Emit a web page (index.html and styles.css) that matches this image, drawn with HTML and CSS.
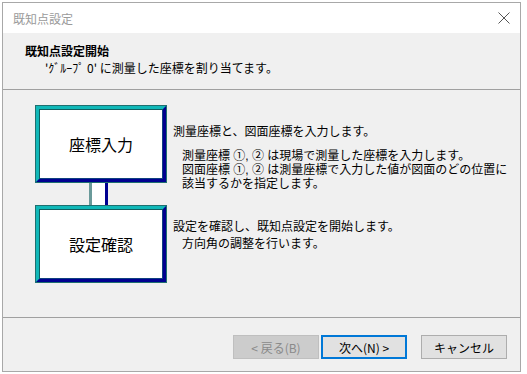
FILE: index.html
```html
<!DOCTYPE html>
<html>
<head>
<meta charset="utf-8">
<title>既知点設定</title>
<link rel="stylesheet" href="styles.css">
</head>
<body>
<div class="dialog">
  <div class="titlebar">
    <span class="title">既知点設定</span>
    <svg class="close" width="12" height="12" viewBox="0 0 12 12"><path d="M0.5 0.5L11.5 11.5M11.5 0.5L0.5 11.5" stroke="#555" stroke-width="1" fill="none"/></svg>
  </div>
  <div class="header">
    <div class="head-title">既知点設定開始</div>
    <div class="head-sub">'ｸﾞﾙｰﾌﾟ 0' に測量した座標を割り当てます。</div>
  </div>
  <div class="content">
    <div class="step">
      <div class="box">座標入力</div>
      <div class="desc">
        <p class="lead">測量座標と、図面座標を入力します。</p>
        <p class="note">測量座標 ①, ② は現場で測量した座標を入力します。<br>図面座標 ①, ② は測量座標で入力した値が図面のどの位置に<br>該当するかを指定します。</p>
      </div>
    </div>
    <div class="link"></div>
    <div class="step">
      <div class="box">設定確認</div>
      <div class="desc">
        <p class="lead second">設定を確認し、既知点設定を開始します。</p>
        <p class="note second">方向角の調整を行います。</p>
      </div>
    </div>
  </div>
  <div class="footer">
    <button class="btn disabled">&lt; 戻る(B)</button>
    <button class="btn default">次へ(N) &gt;</button>
    <button class="btn cancel">キャンセル</button>
  </div>
</div>
</body>
</html>
```

FILE: styles.css
```css
body {
    margin: 0;
    background-color: #ffffff;
    font-family: "Noto Sans CJK JP", "DejaVu Sans", sans-serif;
    font-size: 12px;
    color: #000;
}

.dialog {
    margin: 2px 0 0 2px;
    width: 517px;
    height: 368px;
    border: 1px solid #a8a8a8;
    background-color: #f0f0f0;
    display: flex;
    flex-direction: column;
}

.titlebar {
    height: 30px;
    background-color: #ffffff;
    display: flex;
    align-items: center;
    justify-content: space-between;
    padding: 0 10px 0 10px;
}

.title {
    color: #9a9a9a;
    font-size: 12px;
}

.header {
    height: 57px;
    border-bottom: 1px solid #a0a0a0;
    padding-left: 22px;
    box-sizing: border-box;
    padding-top: 9px;
}

.head-title {
    font-weight: bold;
    line-height: 18px;
}

.head-sub {
    padding-left: 20px;
    line-height: 16px;
}

.content {
    height: 228px;
    padding: 15px 0 0 32px;
    box-sizing: border-box;
    border-bottom: 1px solid #a0a0a0;
}

.step {
    display: flex;
    height: 78px;
}

.box {
    flex: none;
    width: 132px;
    height: 78px;
    box-sizing: border-box;
    background-color: #ffffff;
    border: 4px solid;
    border-color: #10b8b8 #000090 #000090 #10b8b8;
    outline: 1px solid #207070;
    outline-offset: -1px;
    box-shadow: inset 1px 1px 0 #106060, inset -1px -1px 0 #104080;
    display: flex;
    align-items: center;
    justify-content: center;
    font-size: 16px;
}

.desc {
    padding-left: 6px;
}

.desc p {
    margin: 0;
    line-height: 13px;
    white-space: nowrap;
}

.lead {
    margin-top: 19px !important;
}

.note {
    margin-top: 12px !important;
    padding-left: 9px;
    font-family: "Liberation Sans", "Noto Sans CJK JP", sans-serif;
}

.desc .note {
    line-height: 14px;
}

.lead.second {
    margin-top: 14px !important;
}

.note.second {
    margin-top: 5px !important;
}

.link {
    height: 22px;
    width: 13px;
    margin-left: 54px;
    background-color: #ffffff;
    border-left: 3px solid #6a9a9a;
    border-right: 3px solid #000090;
}

.footer {
    display: flex;
    padding: 17px 0 0 230px;
}

.btn {
    height: 24px;
    width: 86px;
    font-family: "Noto Sans CJK JP", "DejaVu Sans", sans-serif;
    font-size: 12px;
    background-color: #e1e1e1;
    border: 1px solid #adadad;
    padding: 0;
    color: #000;
}

.btn.disabled {
    background-color: #cccccc;
    border-color: #bfbfbf;
    color: #8a8a8a;
}

.btn.default {
    margin-left: 2px;
    border: 2px solid #0078d7;
}

.btn.cancel {
    margin-left: 14px;
}
```
